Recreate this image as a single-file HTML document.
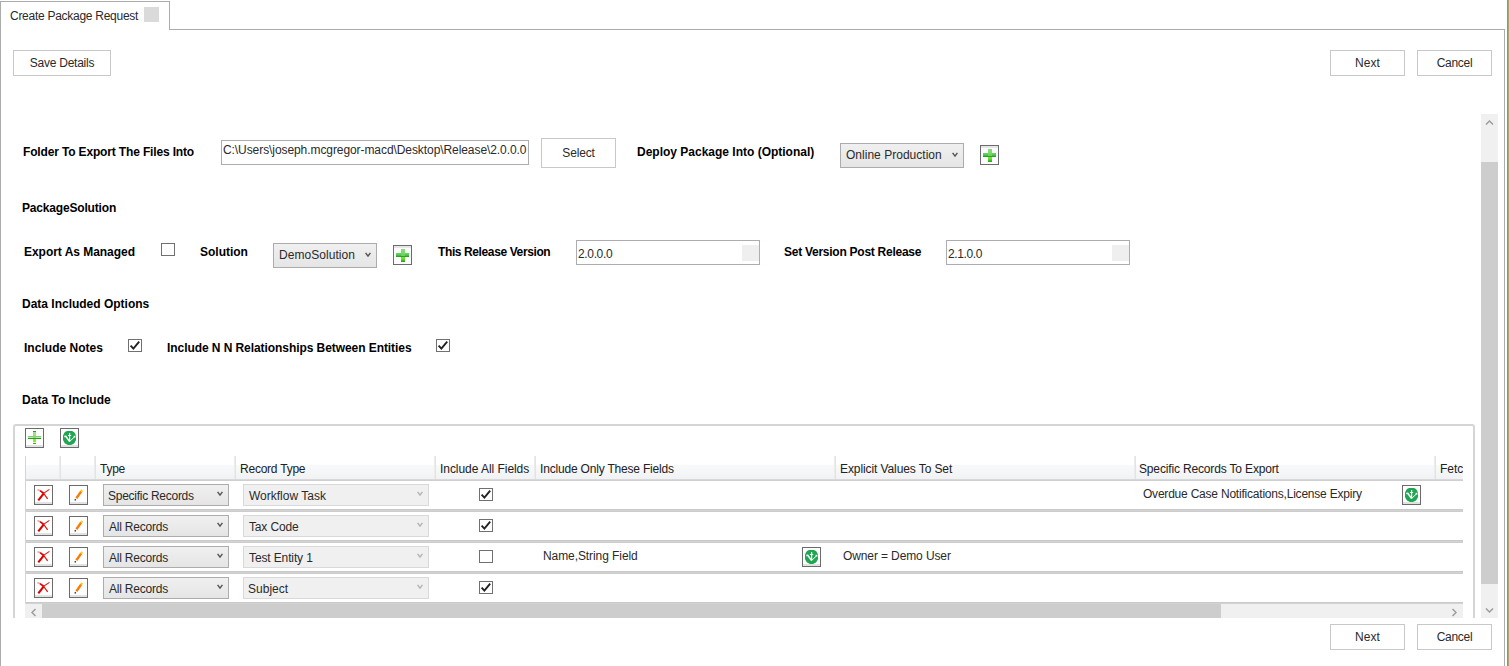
<!DOCTYPE html>
<html><head><meta charset="utf-8"><title>Create Package Request</title><style>
html,body{margin:0;padding:0;background:#fff;width:1509px;height:666px;overflow:hidden;position:relative}
body div, body svg{position:absolute;box-sizing:border-box}
.t{font-family:"Liberation Sans", sans-serif;font-size:12px;line-height:12px;white-space:pre;color:#2a2a2a}
.btn{border:1px solid #c8c8c8;background:#fff}
.cmb{border:1px solid #acacac;background:linear-gradient(#f0f0f0,#e5e5e5)}
.cmbd{border:1px solid #d9d9d9;background:#f0f0f0}
.chk{width:14px;height:13px;border:1px solid #707070;background:#fff}
.ibt{width:19px;height:20px;border:1px solid #6b6b6b;background:linear-gradient(#e6e6e6 0,#e6e6e6 2px,#fcfcfc 2px)}
.ib{width:19px;height:20px;border:1px solid #6b6b6b;background:linear-gradient(#fff 0,#fff 16px,#e2e2e2 16px,#e2e2e2 18px)}
</style></head><body>
<div style="left:0px;top:1px;width:170px;height:29px;border:1px solid #acacac;border-bottom:none;background:#fff"></div>
<div style="left:169px;top:29px;width:1336px;height:1px;background:#acacac"></div>
<div style="left:0px;top:29px;width:1px;height:637px;background:#acacac"></div>
<div style="left:1504px;top:29px;width:1px;height:637px;background:#acacac"></div>
<div style="left:1507px;top:0px;width:1px;height:666px;background:#7ba84c"></div>
<div style="left:1508px;top:0px;width:1px;height:666px;background:#8cbb5a"></div>
<div class="t" style="left:10px;top:10px;letter-spacing:-0.271px;">Create Package Request</div>
<div style="left:144px;top:7px;width:15px;height:15px;background:#dadada"></div>
<div class="btn" style="left:13px;top:50px;width:98px;height:26px;"></div>
<div class="t" style="left:13px;top:57px;width:98px;text-align:center;letter-spacing:-0.245px;">Save Details</div>
<div class="btn" style="left:1330px;top:50px;width:75px;height:26px;"></div>
<div class="t" style="left:1330px;top:57px;width:75px;text-align:center;letter-spacing:0.067px;">Next</div>
<div class="btn" style="left:1417px;top:50px;width:75px;height:26px;"></div>
<div class="t" style="left:1417px;top:57px;width:75px;text-align:center;letter-spacing:-0.303px;">Cancel</div>
<div class="btn" style="left:1330px;top:624px;width:75px;height:26px;"></div>
<div class="t" style="left:1330px;top:631px;width:75px;text-align:center;letter-spacing:0.067px;">Next</div>
<div class="btn" style="left:1417px;top:624px;width:75px;height:26px;"></div>
<div class="t" style="left:1417px;top:631px;width:75px;text-align:center;letter-spacing:-0.303px;">Cancel</div>
<div id="sv" style="left:0;top:0;width:1509px;height:618px;overflow:hidden">
<div style="left:1481px;top:114px;width:17px;height:504px;background:#f0f0f0"></div>
<div style="left:1481px;top:162px;width:17px;height:422px;background:#cdcdcd"></div>
<svg style="left:1485px;top:119px" width="9" height="7"><polyline points="1,5.5 4.5,2 8,5.5" fill="none" stroke="#9a9a9a" stroke-width="1.4"/></svg>
<svg style="left:1485px;top:607px" width="9" height="7"><polyline points="1,1.5 4.5,5 8,1.5" fill="none" stroke="#9a9a9a" stroke-width="1.4"/></svg>
<div class="t" style="left:23px;top:146px;font-weight:bold;color:#000;letter-spacing:-0.153px;">Folder To Export The Files Into</div>
<div style="left:221px;top:140px;width:308px;height:25px;border:1px solid #abadb3;background:#fff;overflow:hidden"></div>
<div class="t" style="left:223px;top:144px;letter-spacing:-0.077px;width:304px;height:16px;overflow:hidden">C:\Users\joseph.mcgregor-macd\Desktop\Release\2.0.0.0</div>
<div class="btn" style="left:541px;top:138px;width:75px;height:30px;"></div>
<div class="t" style="left:541px;top:147px;width:75px;text-align:center;letter-spacing:-0.16px;">Select</div>
<div class="t" style="left:637px;top:146px;font-weight:bold;color:#000;letter-spacing:-0.003px;">Deploy Package Into (Optional)</div>
<div class="cmb" style="left:840px;top:143px;width:124px;height:25px;"></div>
<div class="t" style="left:846px;top:149px;letter-spacing:0.019px;">Online Production</div>
<svg style="left:951px;top:151px" width="8" height="8"><polyline points="1.6,1.9 4,5.1 6.4,1.9" fill="none" stroke="#555555" stroke-width="1.5"/></svg>
<div class="ibt" style="left:980px;top:145px;"></div>
<svg style="left:980px;top:145px" width="19" height="20"><defs><linearGradient id="ph" x1="0" y1="0" x2="0" y2="1"><stop offset="0" stop-color="#6fd46f"/><stop offset="0.5" stop-color="#52c852"/><stop offset="1" stop-color="#179a17"/></linearGradient><linearGradient id="pv" x1="0" y1="0" x2="0" y2="1"><stop offset="0" stop-color="#8cd68c"/><stop offset="0.75" stop-color="#6fe02a"/><stop offset="1" stop-color="#1e9e1e"/></linearGradient></defs><rect x="8" y="4" width="4" height="13" fill="url(#pv)"/><rect x="3" y="8" width="13" height="4" fill="url(#ph)"/><rect x="8" y="8" width="4" height="3" fill="#72d860" opacity="0.8"/></svg>
<div class="t" style="left:22px;top:202px;font-weight:bold;color:#000;letter-spacing:-0.175px;">PackageSolution</div>
<div class="t" style="left:24px;top:246px;font-weight:bold;color:#000;letter-spacing:-0.038px;">Export As Managed</div>
<div class="chk" style="left:161px;top:243px;"></div>
<div class="t" style="left:200px;top:246px;font-weight:bold;color:#000;letter-spacing:-0.014px;">Solution</div>
<div class="cmb" style="left:273px;top:243px;width:104px;height:25px;"></div>
<div class="t" style="left:279px;top:249px;letter-spacing:0.055px;">DemoSolution</div>
<svg style="left:364px;top:251px" width="8" height="8"><polyline points="1.6,1.9 4,5.1 6.4,1.9" fill="none" stroke="#555555" stroke-width="1.5"/></svg>
<div class="ibt" style="left:393px;top:245px;"></div>
<svg style="left:393px;top:245px" width="19" height="20"><defs><linearGradient id="ph2" x1="0" y1="0" x2="0" y2="1"><stop offset="0" stop-color="#6fd46f"/><stop offset="0.5" stop-color="#52c852"/><stop offset="1" stop-color="#179a17"/></linearGradient><linearGradient id="pv2" x1="0" y1="0" x2="0" y2="1"><stop offset="0" stop-color="#8cd68c"/><stop offset="0.75" stop-color="#6fe02a"/><stop offset="1" stop-color="#1e9e1e"/></linearGradient></defs><rect x="8" y="4" width="4" height="13" fill="url(#pv2)"/><rect x="3" y="8" width="13" height="4" fill="url(#ph2)"/><rect x="8" y="8" width="4" height="3" fill="#72d860" opacity="0.8"/></svg>
<div class="t" style="left:438px;top:246px;font-weight:bold;color:#000;letter-spacing:-0.389px;">This Release Version</div>
<div style="left:576px;top:240px;width:184px;height:25px;border:1px solid #abadb3;background:#fff"></div>
<div class="t" style="left:578px;top:248px;letter-spacing:-0.35px;">2.0.0.0</div>
<div style="left:742px;top:245px;width:17px;height:16px;background:#efefef"></div>
<div class="t" style="left:784px;top:246px;font-weight:bold;color:#000;letter-spacing:-0.261px;">Set Version Post Release</div>
<div style="left:946px;top:240px;width:184px;height:25px;border:1px solid #abadb3;background:#fff"></div>
<div class="t" style="left:948px;top:248px;letter-spacing:-0.367px;">2.1.0.0</div>
<div style="left:1112px;top:245px;width:17px;height:16px;background:#efefef"></div>
<div class="t" style="left:22px;top:298px;font-weight:bold;color:#000;letter-spacing:-0.005px;">Data Included Options</div>
<div class="t" style="left:24px;top:342px;font-weight:bold;color:#000;letter-spacing:0.025px;">Include Notes</div>
<div class="chk" style="left:128px;top:339px;"></div>
<svg style="left:128px;top:339px" width="14" height="13"><polyline points="2.6,6.6 5.4,9.6 11.2,2.6" fill="none" stroke="#222" stroke-width="1.9"/></svg>
<div class="t" style="left:167px;top:342px;font-weight:bold;color:#000;letter-spacing:-0.068px;">Include N N Relationships Between Entities</div>
<div class="chk" style="left:436px;top:339px;"></div>
<svg style="left:436px;top:339px" width="14" height="13"><polyline points="2.6,6.6 5.4,9.6 11.2,2.6" fill="none" stroke="#222" stroke-width="1.9"/></svg>
<div class="t" style="left:22px;top:394px;font-weight:bold;color:#000;letter-spacing:0.021px;">Data To Include</div>
<div style="left:13px;top:424px;width:1462px;height:260px;border:2px solid #d5d5d5;border-radius:3px"></div>
<div class="ib" style="left:25px;top:428px;"></div>
<svg style="left:25px;top:428px" width="19" height="20"><defs><linearGradient id="pgl" x1="0" y1="0" x2="0" y2="1"><stop offset="0" stop-color="#a8dca8"/><stop offset="1" stop-color="#80ee10"/></linearGradient></defs><rect x="8" y="3" width="3" height="13" fill="url(#pgl)"/><rect x="3" y="8" width="13" height="1" fill="#7ad27a"/><rect x="3" y="9" width="13" height="1" fill="#b6eab0"/><rect x="3" y="10" width="13" height="1" fill="#2aa010"/><rect x="8" y="9" width="3" height="1" fill="#8ee070"/><rect x="8" y="3" width="3" height="1" fill="#2a9a2a"/><rect x="8" y="14" width="3" height="1" fill="#e0f8d0"/><rect x="8" y="15" width="3" height="1" fill="#3bb010"/></svg>
<div class="ib" style="left:60px;top:428px;"></div>
<svg style="left:60px;top:428px" width="19" height="20"><path d="M7,3 h5 l2,1 l1,1.5 l1,2 v4.5 l-1,2 l-1,1.5 l-2,1 l-1,0.5 h-3 l-1,-0.5 l-2,-1 l-1,-1.5 l-1,-2 v-4.5 l1,-2 l1,-1.5 z" fill="#1ea650"/><path d="M9.6,5 V13.8 M8,7.5 h3.2" fill="none" stroke="#fff" stroke-width="1.2"/><path d="M4.3,8.6 L5.8,8.4 L9.4,13.3" fill="none" stroke="#fff" stroke-width="1.5"/><path d="M14.2,9.2 L9.8,13.3" fill="none" stroke="#fff" stroke-width="1"/><rect x="13.6" y="7.8" width="1.8" height="1.8" fill="#fff"/></svg>
<div style="left:25px;top:456px;width:1px;height:148px;background:#d5d5d5"></div>
<div style="left:26px;top:456px;width:1437px;height:24px;background:linear-gradient(#fff 0,#fff 9px,#f8f9fa 9px,#f1f2f4 23px)"></div>
<div style="left:26px;top:479px;width:1437px;height:1px;background:#d8d8d8"></div>
<div style="left:26px;top:480px;width:1437px;height:1px;background:#cfcfcf"></div>
<div style="left:59px;top:456px;width:2px;height:23px;background:linear-gradient(90deg,#ececec 0,#ececec 1px,#e3e3e3 1px)"></div>
<div style="left:94px;top:456px;width:2px;height:23px;background:linear-gradient(90deg,#ececec 0,#ececec 1px,#e3e3e3 1px)"></div>
<div style="left:234px;top:456px;width:2px;height:23px;background:linear-gradient(90deg,#ececec 0,#ececec 1px,#e3e3e3 1px)"></div>
<div style="left:434px;top:456px;width:2px;height:23px;background:linear-gradient(90deg,#ececec 0,#ececec 1px,#e3e3e3 1px)"></div>
<div style="left:534px;top:456px;width:2px;height:23px;background:linear-gradient(90deg,#ececec 0,#ececec 1px,#e3e3e3 1px)"></div>
<div style="left:834px;top:456px;width:2px;height:23px;background:linear-gradient(90deg,#ececec 0,#ececec 1px,#e3e3e3 1px)"></div>
<div style="left:1134px;top:456px;width:2px;height:23px;background:linear-gradient(90deg,#ececec 0,#ececec 1px,#e3e3e3 1px)"></div>
<div style="left:1434px;top:456px;width:2px;height:23px;background:linear-gradient(90deg,#ececec 0,#ececec 1px,#e3e3e3 1px)"></div>
<div style="left:26px;top:456px;width:1437px;height:160px;overflow:hidden">
<div class="t" style="left:74px;top:7px;letter-spacing:-0.267px;color:#222;">Type</div>
<div class="t" style="left:214px;top:7px;letter-spacing:-0.23px;color:#222;">Record Type</div>
<div class="t" style="left:414px;top:7px;letter-spacing:-0.047px;color:#222;">Include All Fields</div>
<div class="t" style="left:514px;top:7px;letter-spacing:-0.188px;color:#222;">Include Only These Fields</div>
<div class="t" style="left:814px;top:7px;letter-spacing:-0.095px;color:#222;">Explicit Values To Set</div>
<div class="t" style="left:1113px;top:7px;letter-spacing:-0.156px;color:#222;">Specific Records To Export</div>
<div class="t" style="left:1414px;top:7px;color:#222;">Fetch XML</div>
</div>
<div style="left:26px;top:509px;width:1437px;height:3px;background:linear-gradient(#c9c9c9 0,#c9c9c9 1px,#d3d3d3 1px,#d3d3d3 2px,#cdcdcd 2px)"></div>
<div class="ib" style="left:34px;top:485px;"></div>
<svg style="left:34px;top:485px" width="19" height="20"><path d="M4.3,15.3 L9.8,8.3" fill="none" stroke="#dc0000" stroke-width="2.1"/><path d="M9.5,8.4 L15.4,4.4" fill="none" stroke="#e01010" stroke-width="1.1"/><path d="M3.4,4.8 L6.2,5.6" fill="none" stroke="#f6a0a0" stroke-width="1.6"/><path d="M6,5.6 L9.6,8.2" fill="none" stroke="#e00000" stroke-width="1.7"/><path d="M9.4,8 L13.6,13.8" fill="none" stroke="#dd1000" stroke-width="1.2"/></svg>
<div class="ib" style="left:69px;top:485px;"></div>
<svg style="left:69px;top:485px" width="19" height="20"><path d="M7.4,13.2 L12.2,6.4" fill="none" stroke="#ff7a00" stroke-width="2.4"/><path d="M7,13.8 L6.5,14.6" fill="none" stroke="#f0c8a0" stroke-width="1.4"/><path d="M12,6.6 L13.2,5" fill="none" stroke="#ffd000" stroke-width="2.2"/><rect x="5.6" y="14.2" width="1.3" height="1.3" fill="#111"/></svg>
<div class="cmb" style="left:103px;top:484px;width:126px;height:22px;"></div>
<div class="t" style="left:108px;top:490px;letter-spacing:-0.267px;">Specific Records</div>
<svg style="left:216px;top:490px" width="8" height="8"><polyline points="1.6,1.9 4,5.1 6.4,1.9" fill="none" stroke="#555555" stroke-width="1.5"/></svg>
<div class="cmbd" style="left:243px;top:484px;width:186px;height:22px;"></div>
<div class="t" style="left:249px;top:490px;letter-spacing:0.0px;">Workflow Task</div>
<svg style="left:416px;top:490px" width="8" height="8"><polyline points="1.6,1.9 4,5.1 6.4,1.9" fill="none" stroke="#b4b4b4" stroke-width="1.5"/></svg>
<div class="chk" style="left:479px;top:488px;"></div>
<svg style="left:479px;top:488px" width="14" height="13"><polyline points="2.6,6.6 5.4,9.6 11.2,2.6" fill="none" stroke="#222" stroke-width="1.9"/></svg>
<div style="left:26px;top:540px;width:1437px;height:3px;background:linear-gradient(#c9c9c9 0,#c9c9c9 1px,#d3d3d3 1px,#d3d3d3 2px,#cdcdcd 2px)"></div>
<div class="ib" style="left:34px;top:516px;"></div>
<svg style="left:34px;top:516px" width="19" height="20"><path d="M4.3,15.3 L9.8,8.3" fill="none" stroke="#dc0000" stroke-width="2.1"/><path d="M9.5,8.4 L15.4,4.4" fill="none" stroke="#e01010" stroke-width="1.1"/><path d="M3.4,4.8 L6.2,5.6" fill="none" stroke="#f6a0a0" stroke-width="1.6"/><path d="M6,5.6 L9.6,8.2" fill="none" stroke="#e00000" stroke-width="1.7"/><path d="M9.4,8 L13.6,13.8" fill="none" stroke="#dd1000" stroke-width="1.2"/></svg>
<div class="ib" style="left:69px;top:516px;"></div>
<svg style="left:69px;top:516px" width="19" height="20"><path d="M7.4,13.2 L12.2,6.4" fill="none" stroke="#ff7a00" stroke-width="2.4"/><path d="M7,13.8 L6.5,14.6" fill="none" stroke="#f0c8a0" stroke-width="1.4"/><path d="M12,6.6 L13.2,5" fill="none" stroke="#ffd000" stroke-width="2.2"/><rect x="5.6" y="14.2" width="1.3" height="1.3" fill="#111"/></svg>
<div class="cmb" style="left:103px;top:515px;width:126px;height:22px;"></div>
<div class="t" style="left:109px;top:521px;letter-spacing:-0.21px;">All Records</div>
<svg style="left:216px;top:521px" width="8" height="8"><polyline points="1.6,1.9 4,5.1 6.4,1.9" fill="none" stroke="#555555" stroke-width="1.5"/></svg>
<div class="cmbd" style="left:243px;top:515px;width:186px;height:22px;"></div>
<div class="t" style="left:249px;top:521px;letter-spacing:-0.157px;">Tax Code</div>
<svg style="left:416px;top:521px" width="8" height="8"><polyline points="1.6,1.9 4,5.1 6.4,1.9" fill="none" stroke="#b4b4b4" stroke-width="1.5"/></svg>
<div class="chk" style="left:479px;top:519px;"></div>
<svg style="left:479px;top:519px" width="14" height="13"><polyline points="2.6,6.6 5.4,9.6 11.2,2.6" fill="none" stroke="#222" stroke-width="1.9"/></svg>
<div style="left:26px;top:571px;width:1437px;height:3px;background:linear-gradient(#c9c9c9 0,#c9c9c9 1px,#d3d3d3 1px,#d3d3d3 2px,#cdcdcd 2px)"></div>
<div class="ib" style="left:34px;top:547px;"></div>
<svg style="left:34px;top:547px" width="19" height="20"><path d="M4.3,15.3 L9.8,8.3" fill="none" stroke="#dc0000" stroke-width="2.1"/><path d="M9.5,8.4 L15.4,4.4" fill="none" stroke="#e01010" stroke-width="1.1"/><path d="M3.4,4.8 L6.2,5.6" fill="none" stroke="#f6a0a0" stroke-width="1.6"/><path d="M6,5.6 L9.6,8.2" fill="none" stroke="#e00000" stroke-width="1.7"/><path d="M9.4,8 L13.6,13.8" fill="none" stroke="#dd1000" stroke-width="1.2"/></svg>
<div class="ib" style="left:69px;top:547px;"></div>
<svg style="left:69px;top:547px" width="19" height="20"><path d="M7.4,13.2 L12.2,6.4" fill="none" stroke="#ff7a00" stroke-width="2.4"/><path d="M7,13.8 L6.5,14.6" fill="none" stroke="#f0c8a0" stroke-width="1.4"/><path d="M12,6.6 L13.2,5" fill="none" stroke="#ffd000" stroke-width="2.2"/><rect x="5.6" y="14.2" width="1.3" height="1.3" fill="#111"/></svg>
<div class="cmb" style="left:103px;top:546px;width:126px;height:22px;"></div>
<div class="t" style="left:109px;top:552px;letter-spacing:-0.21px;">All Records</div>
<svg style="left:216px;top:552px" width="8" height="8"><polyline points="1.6,1.9 4,5.1 6.4,1.9" fill="none" stroke="#555555" stroke-width="1.5"/></svg>
<div class="cmbd" style="left:243px;top:546px;width:186px;height:22px;"></div>
<div class="t" style="left:249px;top:552px;letter-spacing:-0.125px;">Test Entity 1</div>
<svg style="left:416px;top:552px" width="8" height="8"><polyline points="1.6,1.9 4,5.1 6.4,1.9" fill="none" stroke="#b4b4b4" stroke-width="1.5"/></svg>
<div class="chk" style="left:479px;top:550px;"></div>
<div style="left:26px;top:602px;width:1437px;height:3px;background:linear-gradient(#c9c9c9 0,#c9c9c9 1px,#d3d3d3 1px,#d3d3d3 2px,#cdcdcd 2px)"></div>
<div class="ib" style="left:34px;top:578px;"></div>
<svg style="left:34px;top:578px" width="19" height="20"><path d="M4.3,15.3 L9.8,8.3" fill="none" stroke="#dc0000" stroke-width="2.1"/><path d="M9.5,8.4 L15.4,4.4" fill="none" stroke="#e01010" stroke-width="1.1"/><path d="M3.4,4.8 L6.2,5.6" fill="none" stroke="#f6a0a0" stroke-width="1.6"/><path d="M6,5.6 L9.6,8.2" fill="none" stroke="#e00000" stroke-width="1.7"/><path d="M9.4,8 L13.6,13.8" fill="none" stroke="#dd1000" stroke-width="1.2"/></svg>
<div class="ib" style="left:69px;top:578px;"></div>
<svg style="left:69px;top:578px" width="19" height="20"><path d="M7.4,13.2 L12.2,6.4" fill="none" stroke="#ff7a00" stroke-width="2.4"/><path d="M7,13.8 L6.5,14.6" fill="none" stroke="#f0c8a0" stroke-width="1.4"/><path d="M12,6.6 L13.2,5" fill="none" stroke="#ffd000" stroke-width="2.2"/><rect x="5.6" y="14.2" width="1.3" height="1.3" fill="#111"/></svg>
<div class="cmb" style="left:103px;top:577px;width:126px;height:22px;"></div>
<div class="t" style="left:109px;top:583px;letter-spacing:-0.21px;">All Records</div>
<svg style="left:216px;top:583px" width="8" height="8"><polyline points="1.6,1.9 4,5.1 6.4,1.9" fill="none" stroke="#555555" stroke-width="1.5"/></svg>
<div class="cmbd" style="left:243px;top:577px;width:186px;height:22px;"></div>
<div class="t" style="left:248px;top:583px;letter-spacing:0.017px;">Subject</div>
<svg style="left:416px;top:583px" width="8" height="8"><polyline points="1.6,1.9 4,5.1 6.4,1.9" fill="none" stroke="#b4b4b4" stroke-width="1.5"/></svg>
<div class="chk" style="left:479px;top:581px;"></div>
<svg style="left:479px;top:581px" width="14" height="13"><polyline points="2.6,6.6 5.4,9.6 11.2,2.6" fill="none" stroke="#222" stroke-width="1.9"/></svg>
<div class="t" style="left:1143px;top:488px;letter-spacing:-0.212px;">Overdue Case Notifications,License Expiry</div>
<div class="ib" style="left:1402px;top:485px;"></div>
<svg style="left:1402px;top:485px" width="19" height="20"><path d="M7,3 h5 l2,1 l1,1.5 l1,2 v4.5 l-1,2 l-1,1.5 l-2,1 l-1,0.5 h-3 l-1,-0.5 l-2,-1 l-1,-1.5 l-1,-2 v-4.5 l1,-2 l1,-1.5 z" fill="#1ea650"/><path d="M9.6,5 V13.8 M8,7.5 h3.2" fill="none" stroke="#fff" stroke-width="1.2"/><path d="M4.3,8.6 L5.8,8.4 L9.4,13.3" fill="none" stroke="#fff" stroke-width="1.5"/><path d="M14.2,9.2 L9.8,13.3" fill="none" stroke="#fff" stroke-width="1"/><rect x="13.6" y="7.8" width="1.8" height="1.8" fill="#fff"/></svg>
<div class="t" style="left:543px;top:550px;letter-spacing:-0.081px;">Name,String Field</div>
<div class="ib" style="left:802px;top:547px;"></div>
<svg style="left:802px;top:547px" width="19" height="20"><path d="M7,3 h5 l2,1 l1,1.5 l1,2 v4.5 l-1,2 l-1,1.5 l-2,1 l-1,0.5 h-3 l-1,-0.5 l-2,-1 l-1,-1.5 l-1,-2 v-4.5 l1,-2 l1,-1.5 z" fill="#1ea650"/><path d="M9.6,5 V13.8 M8,7.5 h3.2" fill="none" stroke="#fff" stroke-width="1.2"/><path d="M4.3,8.6 L5.8,8.4 L9.4,13.3" fill="none" stroke="#fff" stroke-width="1.5"/><path d="M14.2,9.2 L9.8,13.3" fill="none" stroke="#fff" stroke-width="1"/><rect x="13.6" y="7.8" width="1.8" height="1.8" fill="#fff"/></svg>
<div class="t" style="left:843px;top:550px;letter-spacing:-0.112px;">Owner = Demo User</div>
<div style="left:25px;top:604px;width:1438px;height:17px;background:#f0f0f0"></div>
<div style="left:42px;top:604px;width:1179px;height:17px;background:#cdcdcd"></div>
<svg style="left:30px;top:608px" width="7" height="9"><polyline points="5.5,1 2,4.5 5.5,8" fill="none" stroke="#9a9a9a" stroke-width="1.4"/></svg>
<svg style="left:1451px;top:608px" width="7" height="9"><polyline points="1.5,1 5,4.5 1.5,8" fill="none" stroke="#9a9a9a" stroke-width="1.4"/></svg>
</div>
</body></html>
